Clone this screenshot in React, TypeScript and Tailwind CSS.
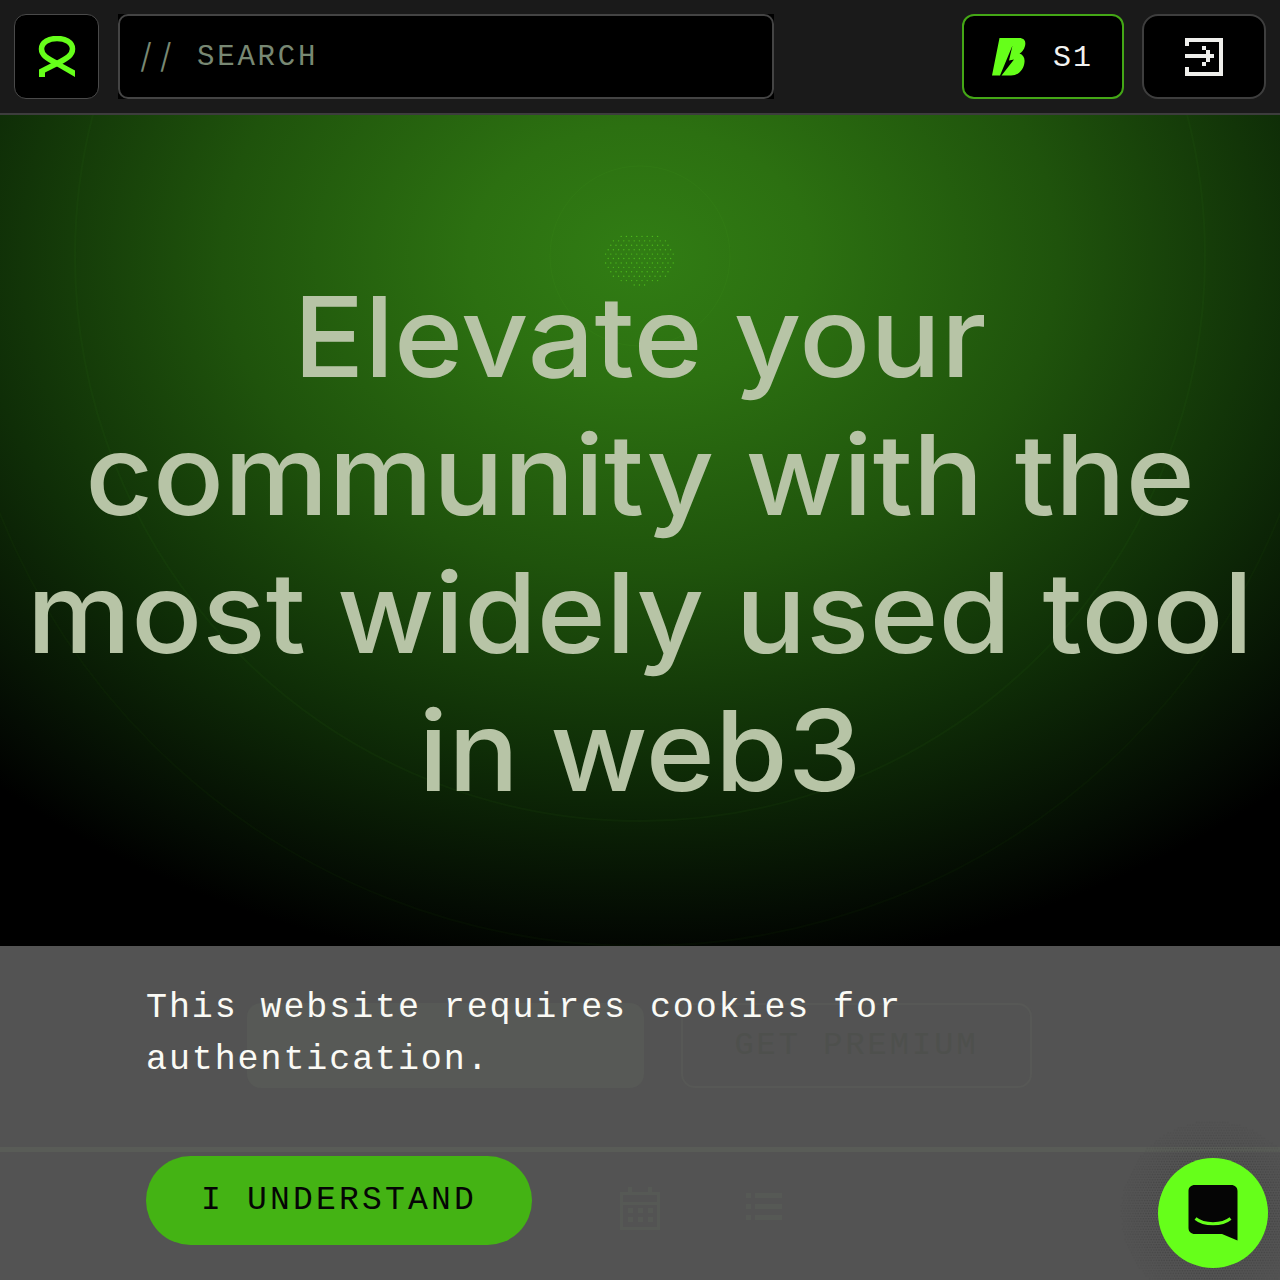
import React from "react";

function dots(cx: number, cy: number, rx: number, ry: number, step: number) {
  const out: { x: number; y: number }[] = [];
  let row = 0;
  for (let y = cy - ry; y <= cy + ry; y += step * 0.85) {
    const off = row % 2 ? step / 2 : 0;
    for (let x = cx - rx + off; x <= cx + rx; x += step) {
      const d = Math.hypot((x - cx) / rx, (y - cy) / ry);
      if (d <= 1) out.push({ x, y });
    }
    row++;
  }
  return out;
}

const centerDots = dots(37, 30, 36, 27, 5.2);

function ringDots() {
  const out: { x: number; y: number; o: number }[] = [];
  let row = 0;
  for (let y = 0; y <= 160; y += 2.6) {
    const off = row % 2 ? 1.3 : 0;
    for (let x = off; x <= 160; x += 2.6) {
      const d = Math.hypot(x - 93, y - 93);
      if (d > 54 && d < 92) out.push({ x, y, o: Math.max(0.2, 1 - (d - 54) / 42) });
    }
    row++;
  }
  return out;
}
const chatDots = ringDots();

function Logo() {
  return (
    <svg width="40" height="42" viewBox="0 0 40 42" fill="none">
      <path
        d="M20 2.5C28 2.5 35.5 6 35.5 13C35.5 19 30 22.5 20 27.5C10 22.500 4.500 19 4.500 13C4.500 6 12 2.500 20 2.500Z"
        stroke="#66ff1a"
        strokeWidth="5.500"
      />
      <path d="M2 41V33.500L19.500 24.500L38 34.500V41L20 30.500L8 36.500V41Z" fill="#66ff1a" />
    </svg>
  );
}

function BoltB() {
  return (
    <svg width="34" height="38" viewBox="0 0 34 38" fill="#66ff1a">
      <path d="M7.500 0H27C33 0 34 4 33 8C32.300 11.500 29.500 14.500 27.500 15.500C31 16.800 33 19.500 32.500 24C32 31 27 37.500 19 37.500H9.500L22 21.500L17 22.500L20.500 7.500L8 37.500H0Z" />
    </svg>
  );
}

function LoginIcon() {
  const c = "#efefec";
  return (
    <svg width="40" height="40" viewBox="0 0 40 40" shapeRendering="crispEdges">
      <rect x="1" y="1" width="38" height="4" fill={c} />
      <rect x="1" y="1" width="4" height="8" fill={c} />
      <rect x="35" y="1" width="4" height="38" fill={c} />
      <rect x="1" y="35" width="38" height="4" fill={c} />
      <rect x="1" y="30" width="4" height="9" fill={c} />
      <rect x="1" y="17" width="28" height="4" fill={c} />
      <rect x="18" y="9" width="4" height="4" fill={c} />
      <rect x="22" y="13" width="4" height="4" fill={c} />
      <rect x="26" y="17" width="4" height="4" fill={c} />
      <rect x="22" y="21" width="4" height="4" fill={c} />
      <rect x="18" y="25" width="4" height="4" fill={c} />
    </svg>
  );
}

function ChatIcon() {
  return (
    <svg width="50" height="56" viewBox="0 0 50 56">
      <path d="M7 0H43C47 0 49.500 2.500 49.500 6V55.500L34 49H7C3 49 0.500 46.500 0.500 43V6C0.500 2.500 3 0 7 0Z" fill="#050505" />
      <path d="M7.500 33.500C16 40.500 34 40.500 42.500 33.500" stroke="#66ff1a" strokeWidth="3" fill="none" />
    </svg>
  );
}

function CalendarIcon() {
  const c = "#565955";
  return (
    <svg width="40" height="44" viewBox="0 0 40 44" shapeRendering="crispEdges">
      <rect x="8" y="0" width="4" height="6" fill={c} />
      <rect x="28" y="0" width="4" height="6" fill={c} />
      <rect x="0" y="5" width="40" height="3" fill={c} />
      <rect x="0" y="5" width="3" height="38" fill={c} />
      <rect x="37" y="5" width="3" height="38" fill={c} />
      <rect x="0" y="40" width="40" height="3" fill={c} />
      <rect x="0" y="15" width="40" height="3" fill={c} />
      {[8, 18, 28].map((x) =>
        [21, 30].map((y) => <rect key={`${x}-${y}`} x={x} y={y} width="5" height="5" fill={c} />)
      )}
    </svg>
  );
}

function ListIcon() {
  const c = "#565955";
  return (
    <svg width="36" height="30" viewBox="0 0 36 30" shapeRendering="crispEdges">
      {[1, 12, 23].map((y) => (
        <g key={y}>
          <rect x="0" y={y} width="5" height="5" fill={c} />
          <rect x="9" y={y} width="27" height="5" fill={c} />
        </g>
      ))}
    </svg>
  );
}

const mono = "font-['Liberation_Mono','DejaVu_Sans_Mono',monospace]";

export default function App() {
  return (
    <div className="relative flex h-[1280px] w-[1280px] flex-col overflow-hidden bg-black">
      <header className="flex h-[115px] items-start justify-between border-b-2 border-[#3d3d3d] bg-[#1a1a1a] px-[14px] pt-[14px]">
        <div className="flex gap-[19px]">
          <div className="flex h-[85px] w-[85px] items-center justify-center rounded-[12px] border border-[#4a4a4a] bg-black">
            <Logo />
          </div>
          <div className="h-[85px] w-[656px] bg-black">
            <div className={`flex h-full items-center rounded-[10px] border-2 border-[#444] pl-[20px] pt-[3px] text-[29px] text-[#788873] ${mono}`}>
              <span className="mb-[6px] w-[57px] font-['Inter',sans-serif] text-[34px] font-light tracking-[8px]">//</span>
              <span className="tracking-[2.800px]">SEARCH</span>
            </div>
          </div>
        </div>
        <div className="flex gap-[18px]">
          <div className={`flex h-[85px] w-[162px] items-center rounded-[12px] border-2 border-[#44a716] bg-black pl-[28px] pt-[1px] text-[30px] tracking-[2px] text-[#f2f2f0] ${mono}`}>
            <BoltB />
            <span className="ml-[27px] mt-[2px]">S1</span>
          </div>
          <div className="flex h-[85px] w-[124px] items-center justify-center rounded-[16px] border-2 border-[#3e3e3e] bg-black">
            <LoginIcon />
          </div>
        </div>
      </header>

      <main className="relative flex flex-1 flex-col items-center bg-[radial-gradient(ellipse_950px_720px_at_640px_141px,#317d14_0%,#2c7011_18%,#1f530c_44%,#0f2e07_70%,#040c03_92%,#000_100%)]">
        <svg className="absolute left-0 top-0" width="1280" height="831" viewBox="0 0 1280 831" fill="none">
          <circle cx="640" cy="141" r="90" stroke="#3a8a1a" strokeOpacity="0.2" />
          <circle cx="640" cy="141" r="565" stroke="#3a8a1a" strokeOpacity="0.07" strokeWidth="2" />
          <circle cx="640" cy="141" r="690" stroke="#3a8a1a" strokeOpacity="0.05" strokeWidth="2" />
        </svg>
        <svg className="absolute left-[602px] top-[114px]" width="76" height="60" viewBox="0 0 76 60">
          {centerDots.map((d, i) => (
            <circle key={i} cx={d.x} cy={d.y} r="0.7" fill="#4cb81c" />
          ))}
        </svg>
        <h1 className="relative mt-[152px] w-[1190px] scale-x-[1.05] text-center font-['Inter',sans-serif] text-[112px] font-medium leading-[138px] text-[#b7c4a6]">
          Elevate your community with the most widely used tool in web3
        </h1>
      </main>

      <div className="absolute inset-x-0 bottom-0 h-[334px] bg-[#535353]">
        <div className="absolute inset-x-0 top-[201px] h-[5px] bg-[#595c57]" />
        <div className="absolute left-[247px] top-[57px] flex gap-[37px]">
          <div className="h-[85px] w-[397px] rounded-[14px] bg-[#575956]" />
          <div className={`flex h-[85px] w-[351px] items-center justify-center rounded-[14px] border-2 border-[#575856] text-[32px] tracking-[3px] text-[#4e504d] ${mono}`}>
            GET PREMIUM
          </div>
        </div>
        <div className="absolute left-[620px] top-[241px]">
          <CalendarIcon />
        </div>
        <div className="absolute left-[746px] top-[246px]">
          <ListIcon />
        </div>

        <div className="relative pl-[146px] pt-[36px]">
          <p className={`w-[800px] text-[35px] leading-[52px] tracking-[1.900px] text-[#fafaf5] ${mono}`}>
            This website requires cookies for authentication.
          </p>
          <button className={`mt-[70px] flex h-[89px] w-[386px] items-center justify-center rounded-[45px] bg-[#44b314] text-[33px] tracking-[3.200px] text-[#050505] ${mono}`}>
            I UNDERSTAND
          </button>
        </div>
      </div>

      <svg className="absolute left-[1120px] top-[1120px]" width="160" height="160" viewBox="0 0 160 160">
        {chatDots.map((d, i) => (
          <circle key={i} cx={d.x} cy={d.y} r="0.8" fill="#444" opacity={d.o} />
        ))}
      </svg>
      <div className="absolute left-[1158px] top-[1158px] flex h-[110px] w-[110px] items-center justify-center rounded-full bg-[#66ff1a]">
        <ChatIcon />
      </div>
    </div>
  );
}
